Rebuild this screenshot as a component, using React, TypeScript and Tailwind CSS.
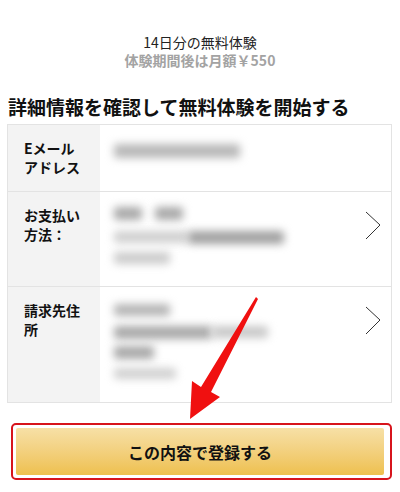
import React from "react";

const FONT = { fontFamily: '"Noto Sans CJK JP", "Noto Sans", sans-serif' };

function Chevron() {
  return (
    <svg className="absolute right-[10px] top-[19px]" width="16" height="29" viewBox="0 0 16 29" fill="none">
      <path d="M1 1 L15 14 L1 28" stroke="#333" strokeWidth="1" />
    </svg>
  );
}

function Blur({ w, h, mt, shade = "bg-[#b8b8b8]" }: { w: string; h: string; mt: string; shade?: string }) {
  return <div className={`${w} ${h} ${mt} ${shade} rounded-[3px] blur-[4px]`} />;
}

function Row({ label, height, children, arrow }: { label: string; height: string; children: React.ReactNode; arrow?: boolean }) {
  return (
    <div className={`flex ${height} border-t border-[#e3e3e3] first:border-t-0`}>
      <div className="w-[92px] shrink-0 bg-[#f3f3f3] pl-4 pr-3 pt-[14px] text-[14px] font-bold leading-[19px] text-[#111]">
        {label}
      </div>
      <div className="relative flex-1 pl-[14px]">
        {children}
        {arrow && <Chevron />}
      </div>
    </div>
  );
}

export default function App() {
  return (
    <div className="relative h-[492px] w-[400px] overflow-hidden bg-white" style={FONT}>
      <div className="pt-[33px] text-center text-[14px] leading-[18px]">
        <p className="text-[#222]">14日分の無料体験</p>
        <p className="font-bold text-[#a3a3a3]">体験期間後は月額￥550</p>
      </div>

      <h1 className="mt-[25px] pl-2 text-[19px] font-bold leading-[26px] text-[#111]">
        詳細情報を確認して無料体験を開始する
      </h1>

      <div className="ml-[7px] mr-2 mt-1 border border-[#e3e3e3]">
        <Row label="Eメールアドレス" height="h-[66px]">
          <Blur w="w-[126px]" h="h-[14px]" mt="mt-[19px]" />
        </Row>
        <Row label="お支払い方法：" height="h-[95px]" arrow>
          <div className="mt-[15px] flex gap-[13px]">
            <Blur w="w-[28px]" h="h-[13px]" mt="mt-0" shade="bg-[#a8a8a8]" />
            <Blur w="w-[28px]" h="h-[13px]" mt="mt-0" shade="bg-[#a8a8a8]" />
          </div>
          <div className="mt-[11px] flex">
            <Blur w="w-[74px]" h="h-[12px]" mt="mt-0" shade="bg-[#cfcfcf]" />
            <Blur w="w-[96px]" h="h-[13px]" mt="mt-0" shade="bg-[#a0a0a0]" />
          </div>
          <Blur w="w-[56px]" h="h-[12px]" mt="mt-[8px]" shade="bg-[#cbcbcb]" />
        </Row>
        <Row label="請求先住所" height="h-[116px]" arrow>
          <Blur w="w-[56px]" h="h-[12px]" mt="mt-[17px]" shade="bg-[#b4b4b4]" />
          <div className="mt-[10px] flex">
            <Blur w="w-[98px]" h="h-[13px]" mt="mt-0" shade="bg-[#a8a8a8]" />
            <Blur w="w-[56px]" h="h-[12px]" mt="mt-0" shade="bg-[#c8c8c8]" />
          </div>
          <Blur w="w-[40px]" h="h-[13px]" mt="mt-[7px]" shade="bg-[#a8a8a8]" />
          <Blur w="w-[62px]" h="h-[11px]" mt="mt-[9px]" shade="bg-[#d0d0d0]" />
        </Row>
      </div>

      <div className="ml-[11px] mr-2 mt-[20px] rounded-[5px] border-2 border-[#d7141c] pb-[3px] pl-[3px] pr-[6px] pt-[3px]">
        <button className="flex h-[47px] w-full items-center justify-center rounded-[2px] bg-gradient-to-b from-[#f7e0a6] to-[#eec04d] text-[16px] font-bold text-[#111]">
          この内容で登録する
        </button>
      </div>

      <svg className="pointer-events-none absolute left-0 top-0" width="400" height="492" viewBox="0 0 400 492">
        <path d="M256 297 L258 299 L211 392 L220 397 L190 419 L192 381 L201 387 Z" fill="#f01010" />
      </svg>
    </div>
  );
}
